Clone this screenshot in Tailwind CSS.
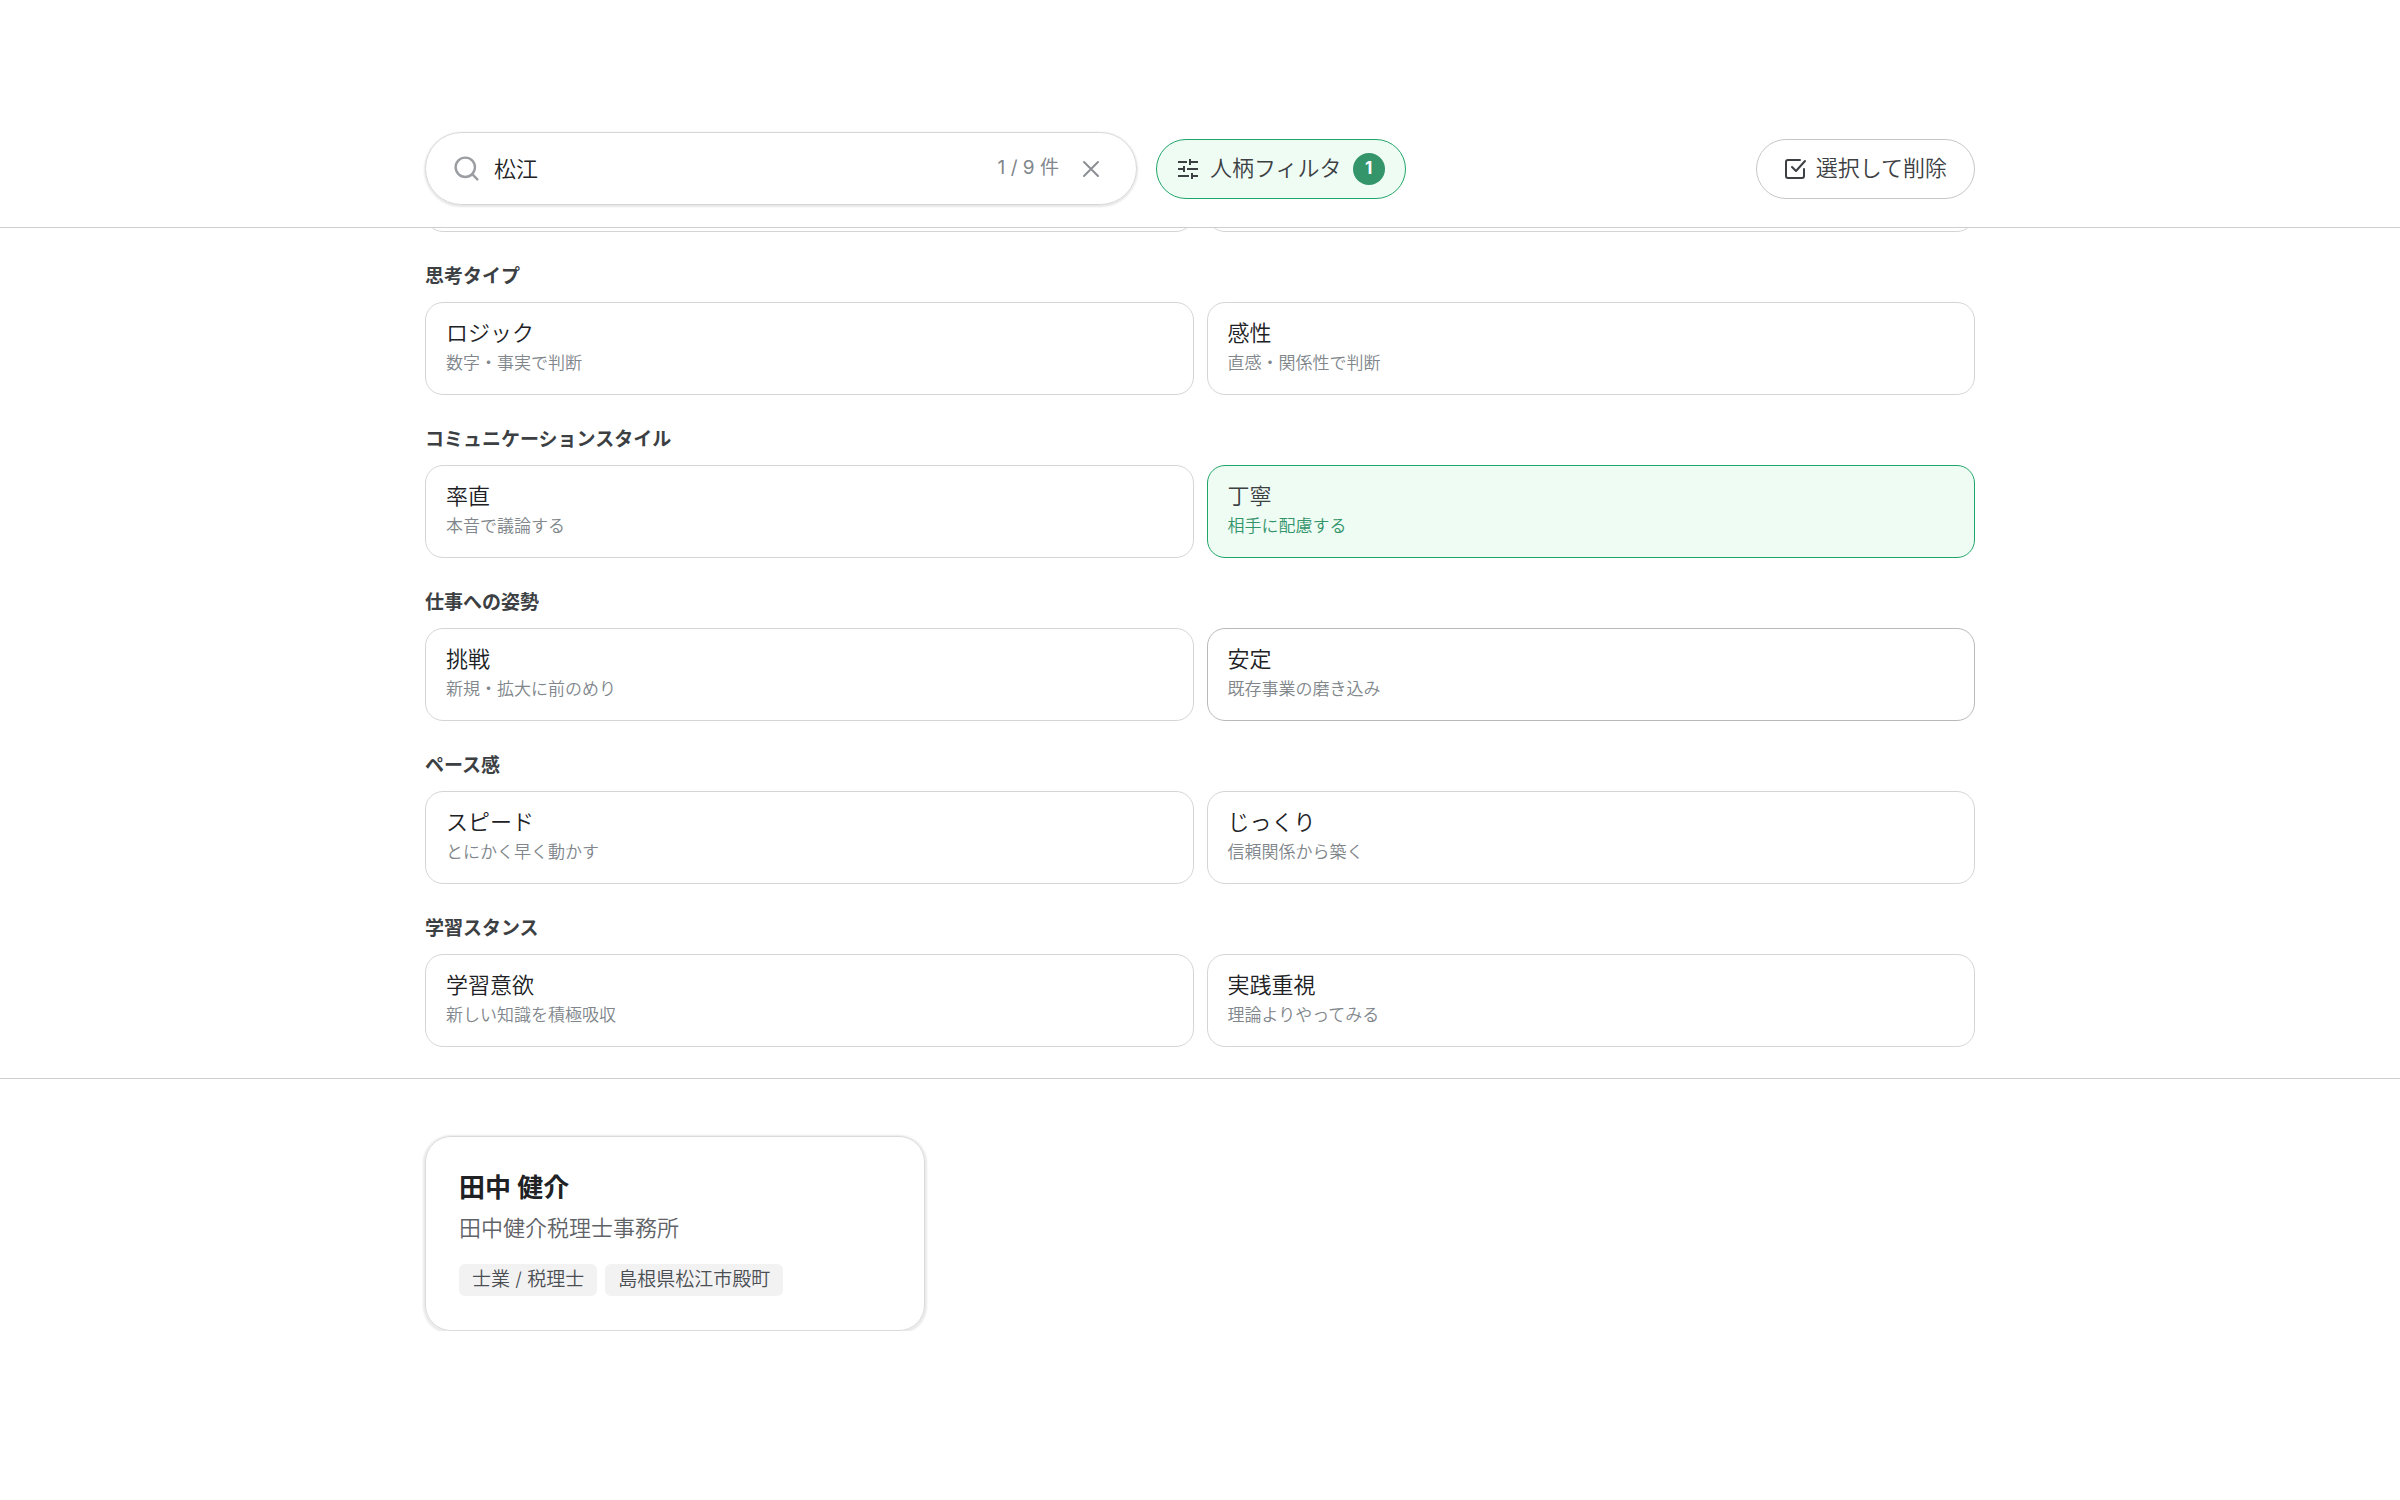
<!DOCTYPE html>
<html lang="ja">
  <head>
    <meta charset="UTF-8" />
    <meta name="viewport" content="width=device-width, initial-scale=1.0" />
    <title>人柄フィルタ</title>
    <script src="https://cdn.jsdelivr.net/npm/@tailwindcss/browser@4"></script>
  </head>
  <body class="bg-white text-[#202124] font-[350] font-['Inter','Noto_Sans_CJK_JP',sans-serif]">
    <header class="border-b border-[#cfcfcf] pt-[132px] pb-[22px]">
      <div class="mx-auto flex max-w-[1550px] items-center">
        <label
          class="flex h-[73px] w-[712px] items-center rounded-full border border-[#d6d7d9] pr-[33px] pl-[26px] shadow-[0_1px_2px_1px_rgba(0,0,0,0.1)]"
        >
          <svg class="size-[29px] shrink-0 text-[#9a9da1]" viewBox="0 0 24 24" fill="none" stroke="currentColor" stroke-width="2" stroke-linecap="round">
            <circle cx="11" cy="11" r="8" />
            <path d="m21 21-4.3-4.3" />
          </svg>
          <input
            type="text"
            value="松江"
            aria-label="検索"
            class="ml-[13px] min-w-0 flex-1 text-[22px] leading-[32px] outline-none"
          />
          <span class="text-[19px] font-normal text-[#80868b]">1 / 9 件</span>
          <button type="button" aria-label="クリア" class="ml-5 text-[#8b8f94]">
            <svg class="size-6" viewBox="0 0 24 24" fill="none" stroke="currentColor" stroke-width="2" stroke-linecap="round">
              <path d="M19 5 5 19M5 5l14 14" />
            </svg>
          </button>
        </label>
        <button
          type="button"
          class="ml-[19px] flex h-[60px] items-center rounded-full border border-[#1fa568] bg-[#effcf4] pr-5 pl-[19px] text-[22px] text-[#3c4043]"
        >
          <svg class="size-6" viewBox="0 0 24 24" fill="none" stroke="currentColor" stroke-width="2">
            <path d="M2 5h9M14 5h8M14 2v6M2 12h6M11 12h11M8 9v6M2 19h11M16 19h6M16 16v6" />
          </svg>
          <span class="ml-[10px]">人柄フィルタ</span>
          <span class="ml-[11px] flex size-8 items-center justify-center rounded-full bg-[#34946a] text-[17px] font-bold text-white">1</span>
        </button>
        <button
          type="button"
          class="ml-auto flex h-[60px] items-center rounded-full border border-[#c6c6c8] pr-[27px] pl-[26px] text-[22px] text-[#3c4043]"
        >
          <svg class="size-6" viewBox="0 0 24 24" fill="none" stroke="currentColor" stroke-width="2" stroke-linecap="round" stroke-linejoin="round">
            <path d="m9 10 4 4L22 4" />
            <path d="M21 12v7a2 2 0 0 1-2 2H5a2 2 0 0 1-2-2V5a2 2 0 0 1 2-2h12" />
          </svg>
          <span class="ml-[9px]">選択して削除</span>
        </button>
      </div>
    </header>

    <section class="border-b border-[#cfcfcf] pb-[31px]">
      <div class="mx-auto max-w-[1550px]">
        <!-- row scrolled under the header -->
        <div class="flex h-1 flex-col justify-end overflow-hidden">
          <div class="grid shrink-0 grid-cols-2 gap-[13px]">
            <div class="h-[93px] rounded-[18px] border border-[#d4d5d7]"></div>
            <div class="h-[93px] rounded-[18px] border border-[#d4d5d7]"></div>
          </div>
        </div>
        <div id="filters"></div>
      </div>
    </section>

    <main class="mx-auto grid max-w-[1550px] grid-cols-3 gap-[25px] pt-[57px]">
      <article
        class="rounded-[26px] border border-[#d9dadc] px-[33px] pt-[31px] pb-[34px] shadow-[0_1px_2px_2px_rgba(0,0,0,0.09)]"
      >
        <h2 class="text-[26px] leading-[40px] font-bold">田中 健介</h2>
        <p class="mt-px text-[22px] leading-[38px] text-[#5f6368]">田中健介税理士事務所</p>
        <div class="mt-[17px] flex gap-2 text-[19px] leading-[32px] text-[#4b4e52]">
          <span class="rounded-[6px] bg-[#f2f2f3] px-[13px]">士業 / 税理士</span>
          <span class="rounded-[6px] bg-[#f2f2f3] px-[13px]">島根県松江市殿町</span>
        </div>
      </article>
    </main>

    <script>
      const groups = [
        { name: '思考タイプ', options: [['ロジック', '数字・事実で判断'], ['感性', '直感・関係性で判断']] },
        { name: 'コミュニケーションスタイル', options: [['率直', '本音で議論する'], ['丁寧', '相手に配慮する', 'selected']] },
        { name: '仕事への姿勢', options: [['挑戦', '新規・拡大に前のめり'], ['安定', '既存事業の磨き込み', 'hover']] },
        { name: 'ペース感', options: [['スピード', 'とにかく早く動かす'], ['じっくり', '信頼関係から築く']] },
        { name: '学習スタンス', options: [['学習意欲', '新しい知識を積極吸収'], ['実践重視', '理論よりやってみる']] },
      ];

      const boxStyles = {
        normal: 'border-[#d4d5d7]',
        hover: 'border-[#b8b9bb]',
        selected: 'border-[#1fa568] bg-[#effcf4]',
      };

      function renderOption([title, note, state = 'normal']) {
        const selected = state === 'selected';
        return `
          <button type="button" aria-pressed="${selected}"
            class="rounded-[18px] border px-5 py-4 text-left ${boxStyles[state]}">
            <span class="block text-[22px] leading-[29px] ${selected ? 'text-[#3c4043]' : 'text-[#202124]'}">${title}</span>
            <span class="block text-[17px] leading-[30px] ${selected ? 'text-[#34946a]' : 'text-[#80868b]'}">${note}</span>
          </button>`;
      }

      document.getElementById('filters').innerHTML = groups
        .map(
          (group) => `
        <h3 class="pt-[31px] pb-[11px] text-[19px] leading-[28px] font-bold text-[#3c4043]">${group.name}</h3>
        <div class="grid grid-cols-2 gap-[13px]">${group.options.map(renderOption).join('')}</div>`
        )
        .join('');
    </script>
  </body>
</html>
